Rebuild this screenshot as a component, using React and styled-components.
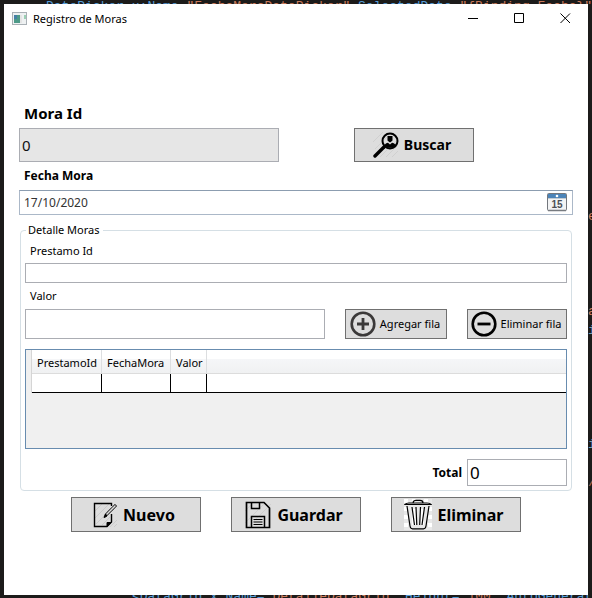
import React from "react";
import styled, { createGlobalStyle, css } from "styled-components";

const GlobalStyle = createGlobalStyle`
  *, *::before, *::after { box-sizing: border-box; }
  html, body, #root { height: 100%; }
  body {
    margin: 0;
    overflow: hidden;
    background: #1e1e1e;
    color: #000;
    font: 12px/16px "Segoe UI", "Noto Sans", "Open Sans", sans-serif;
  }
  button, input { font: inherit; color: inherit; }
`;

const Desktop = styled.div`
  display: grid;
  grid-template: 4px minmax(0, 1fr) 3px / 4px minmax(0, 1fr) 4px;
  height: 100%;
  background: #1c1b1a;
`;

const CodeLine = styled.div`
  grid-column: 1 / -1;
  overflow: hidden;
  white-space: pre;
  color: #569cd6;
  font: 13px/1 "Liberation Mono", monospace;
  line-height: ${(p) => (p.$edge === "top" ? 14 : 3)}px;
  padding-left: ${(p) => (p.$edge === "top" ? 46 : 132)}px;
`;

const CodeValue = styled.span`
  color: #c8795a;
`;

const CodeEdge = styled.div`
  overflow: hidden;
  padding-top: 13px;
  color: #d08060;
  font: 13px/19px "Liberation Mono", monospace;
`;

const CodeRow = styled.div`
  height: 19px;
  color: ${(p) => p.$color};
`;

const Window = styled.main`
  grid-column: 2;
  display: flex;
  flex-direction: column;
  background: #fff;
`;

const TitleBar = styled.header`
  display: flex;
  align-items: center;
  height: 29px;
  padding-left: 8px;
`;

const Title = styled.h1`
  flex: 1;
  margin: 0 0 0 6px;
  font-size: 11px;
  font-weight: 400;
`;

const CaptionButton = styled.button`
  display: grid;
  place-items: center;
  width: 46px;
  height: 29px;
  padding: 0;
  border: 0;
  background: transparent;
`;

const Form = styled.form`
  display: flex;
  flex-direction: column;
  padding: 68px 15px 0;
`;

const Label = styled.label`
  padding-left: 5px;
  font-size: ${(p) => p.$size || 11}px;
  font-weight: ${(p) => (p.$bold ? 700 : 400)};
  line-height: ${(p) => p.$line || 16}px;
  margin-bottom: ${(p) => p.$bottom || 0}px;
`;

const TextBox = styled.input`
  width: ${(p) => p.$width || "100%"};
  min-width: 0;
  height: ${(p) => p.$height}px;
  padding: 0 2px;
  border: 1px solid #abadb3;
  border-radius: 0;
  outline: 0;
  background: #fff;
  font-size: ${(p) => p.$size || 11}px;

  &:disabled { background: #e6e6e6; color: #111; }
`;

const Row = styled.div`
  display: flex;
  align-items: center;
  justify-content: ${(p) => p.$justify || "flex-start"};
  gap: ${(p) => p.$gap || 0}px;
  margin-top: ${(p) => p.$top || 0}px;
`;

const sizes = {
  small: css`height: 30px; gap: 4px; padding: 0 4px 0 2px; font-size: 11px;`,
  medium: css`height: 34px; gap: 4px; padding: 0 4px 0 0; font-size: 14px; font-weight: 700;`,
  large: css`height: 35px; gap: 5px; padding: 0 4px 0 0; font-size: 16px; font-weight: 700;`,
};

const Button = styled.button`
  display: flex;
  flex: none;
  align-items: center;
  justify-content: center;
  width: ${(p) => p.$width}px;
  border: 1px solid #707070;
  background: #ddd;
  white-space: nowrap;
  ${(p) => sizes[p.$size]}
  svg { flex: none; }
`;

const DateBox = styled.div`
  display: flex;
  align-items: center;
  height: 25px;
  padding-right: 5px;
  border: 1px solid #abb8c8;
  border-top-color: #8c9db0;
`;

const DateInput = styled.input`
  flex: 1;
  min-width: 0;
  padding: 0 0 0 4px;
  border: 0;
  outline: 0;
  background: transparent;
  color: #333;
`;

const IconButton = styled.button`
  display: flex;
  padding: 0;
  border: 0;
  background: transparent;
`;

const Group = styled.fieldset`
  min-width: 0;
  margin: 7px 1px 0;
  padding: 4px;
  border: 1px solid #d5dfe5;
  border-radius: 4px;
`;

const Legend = styled.legend`
  margin-left: 1px;
  padding: 0 3px 0 2px;
  font-size: 11px;
`;

const Stack = styled.div`
  display: flex;
  flex-direction: column;
`;

const GridPanel = styled.div`
  height: 100px;
  margin-top: 10px;
  border: 1px solid #688caf;
  background: #f0f0f0;
`;

const Table = styled.table`
  width: 100%;
  border-collapse: separate;
  border-spacing: 0;
  table-layout: fixed;
  font-size: 11px;
`;

const HeadCell = styled.th`
  height: 24px;
  padding: 3px 0 0 5px;
  border-right: ${(p) => (p.$last ? 0 : 1)}px solid #dcdee0;
  border-bottom: 1px solid #dcdcdc;
  background: linear-gradient(#fff 0 40%, #f5f6f8 40%, #f0f1f2);
  font-weight: 400;
  text-align: left;
  white-space: nowrap;
`;

const Corner = styled.td`
  padding: 0;
  border-right: 1px solid #d5d5d5;
  background: #f0f0f0;
`;

const Cell = styled.td`
  height: 19px;
  padding: 0;
  border-right: ${(p) => (p.$last ? 0 : 1)}px solid #000;
  border-bottom: 1px solid #000;
  background: #fff;
`;

const AppIcon = () => (
  <svg width="15" height="13" viewBox="0 0 15 13" aria-hidden="true">
    <rect x=".5" y=".5" width="14" height="12" fill="#eef1f2" stroke="#a9b0b5" />
    <rect x="2" y="3" width="6" height="8" fill="#4d9a88" />
    <path d="M2 3h3v4H2z" fill="#4681a7" />
    <path d="M8 3h2v8H8z" fill="#e4e4e4" />
    <path d="M12 3h2v4h-2z" fill="#9bd0b4" />
  </svg>
);

const Caption = ({ d }) => (
  <svg width="11" height="11" viewBox="0 0 11 11" fill="none" stroke="#000" aria-hidden="true">
    <path d={d} />
  </svg>
);

const SearchUserIcon = () => (
  <svg width="27" height="26" viewBox="0 0 27 26" fill="none" stroke="#000" aria-hidden="true">
    <path d="M0 10 10 0M2 17 19 0M7 25 25 7M13 25 25 13M19 25l6-6" stroke="#d0d0d0" />
    <circle cx="17" cy="9" r="7.5" strokeWidth="2" />
    <path d="M2 24 11 15" strokeWidth="3.4" strokeLinecap="round" />
    <path d="M14.5 4h5v4.500l-2 1.800h-1l-2-1.800z" fill="#000" stroke="none" />
    <path d="M11.500 13.500c.8-1.800 2-2.500 3.500-2.700l2 1.700 2-1.700c1.700.2 3 1 3.500 2.700-2.500 3-8 3.300-11 0z" fill="#000" stroke="none" />
  </svg>
);

const CalendarIcon = () => (
  <svg width="20" height="19" viewBox="0 0 20 19" aria-hidden="true">
    <rect x=".5" y=".5" width="19" height="17" rx="1" fill="#f3f4f5" stroke="#73777d" />
    <path d="M1 1h18v4H1z" fill="#4c84b8" />
    <path d="M1 5.500h18" stroke="#c4cbd1" />
    <circle cx="10" cy="3" r="1.300" fill="#fff" />
    <path d="M1 17.500h18" stroke="#777b80" strokeWidth="1.500" />
    <text x="10" y="14.800" textAnchor="middle" fontFamily="Liberation Sans, sans-serif" fontSize="10" fontWeight="700" fill="#4b4f55">15</text>
  </svg>
);

const CircleIcon = ({ plus }) => (
  <svg width="26" height="26" viewBox="0 0 26 26" fill="none" stroke={plus ? "#3b3939" : "#000"} aria-hidden="true">
    <circle cx="13" cy="13" r="11.300" strokeWidth="2.600" />
    <path d={plus ? "M7 13h12M13 7v12" : "M6.500 13h13"} strokeWidth="2.800" />
  </svg>
);

const NoteIcon = () => (
  <svg width="25" height="26" viewBox="0 0 25 26" fill="none" stroke="#000" aria-hidden="true">
    <path d="M2 9 9 2M2 16 16 2M3 22 17 8M9 23l8-8M17 25l7-7M21 25l3-3" stroke="#cbcbcb" />
    <path d="M18.500 4V1.500H1.500V24.500H14l4.500-4.500V12" strokeWidth="1.400" />
    <path d="M14 24.500V20.500h4z" fill="#000" />
    <path d="M12.500 13.500 23 3" strokeWidth="3" />
    <path d="M13.500 12.500 22.500 3.500" stroke="#ddd" strokeWidth="1.600" />
    <path d="M11 15.500l1-2.500 1.500 1.500z" fill="#000" />
  </svg>
);

const SaveIcon = () => (
  <svg width="27" height="28" viewBox="0 0 27 28" fill="none" stroke="#000" aria-hidden="true">
    <path d="M0 10 8 2M0 22 20 2M4 25 26 3" stroke="#d0d0d0" />
    <path d="M1.500 1.500H19l5.500 5.500v19.500h-23z" strokeWidth="1.700" />
    <path d="M6.500 2v5.500h8V2M6.500 26V15.500h13V26" strokeWidth="1.500" />
    <path d="M8.500 18.500h9M8.500 21h9M8.500 23.500h9" strokeWidth="1.200" />
  </svg>
);

const TrashIcon = () => (
  <svg width="28" height="31" viewBox="0 0 28 31" fill="none" stroke="#000" aria-hidden="true">
    <path d="M0 0h28v31H0z" fill="#e8e8e8" stroke="none" />
    <path d="M0 0h4v4H0zM8 0h4v4H8zM20 0h4v4h-4zM0 8h4v4H0zM24 8h4v4h-4zM0 16h4v4H0zM24 16h4v4h-4zM0 24h4v4H0zM24 24h4v4h-4zM8 10h4v16H8zM16 10h4v16h-4z" fill="#fff" stroke="none" />
    <path d="M1 5.500c1-1.200 2-1.500 4-1.500h18c2 0 3 .3 4 1.500zM9 4c0-2 1.500-2.700 3-2.700h4c1.500 0 3 .7 3 2.700M3 7l3 20c.3 1.800 1 2.800 2.500 2.800h11c1.500 0 2.200-1 2.500-2.800L25 7" strokeWidth="1.200" />
    <path d="M8 8l2.500 18M12 8l.8 18M16.500 8l-.8 18M20.500 8 18 26" strokeWidth="1.200" />
  </svg>
);

const edgeCode = {
  10: ["e", "#d08060"],
  15: ["a", "#d08060"],
  16: ["i", "#6f9fb8"],
  22: ["i", "#6f9fb8"],
  24: ["/", "#b06a50"],
};

export default function App() {
  return (
    <>
      <GlobalStyle />
      <Desktop>
        <CodeLine $edge="top" aria-hidden="true">
          {"DatePicker x:Name="}<CodeValue>"FechaMoraDatePicker"</CodeValue>{" SelectedDate="}<CodeValue>{'"{Binding Fecha}"'}</CodeValue>
        </CodeLine>
        <Window>
          <TitleBar>
            <AppIcon />
            <Title>Registro de Moras</Title>
            <CaptionButton aria-label="Minimizar"><Caption d="M0 5.500h10" /></CaptionButton>
            <CaptionButton aria-label="Maximizar"><Caption d="M.5.5h9v9H.5z" /></CaptionButton>
            <CaptionButton aria-label="Cerrar"><Caption d="M.5.5l9.500 9.500M10 .5l-9.500 9.500" /></CaptionButton>
          </TitleBar>
          <Form onSubmit={(e) => e.preventDefault()}>
            <Label htmlFor="mora" $size={15} $line={24} $bottom={3} $bold>Mora Id</Label>
            <Row $gap={75}>
              <TextBox id="mora" $width="260px" $height={34} $size={15} defaultValue="0" disabled />
              <Button type="button" $size="medium" $width={120}><SearchUserIcon />Buscar</Button>
            </Row>
            <Label htmlFor="fecha" $size={12} $line={28} $bold>Fecha Mora</Label>
            <DateBox>
              <DateInput id="fecha" defaultValue="17/10/2020" />
              <IconButton type="button" aria-label="Abrir calendario"><CalendarIcon /></IconButton>
            </DateBox>
            <Group>
              <Legend>Detalle Moras</Legend>
              <Stack>
                <Label htmlFor="prestamo" $line={18} $bottom={3}>Prestamo Id</Label>
                <TextBox id="prestamo" $height={20} />
                <Label htmlFor="valor" $line={26}>Valor</Label>
                <Row $gap={20}>
                  <TextBox id="valor" $height={30} />
                  <Button type="button" $size="small" $width={102}><CircleIcon plus />Agregar fila</Button>
                  <Button type="button" $size="small" $width={100}><CircleIcon />Eliminar fila</Button>
                </Row>
                <GridPanel>
                  <Table>
                    <colgroup>
                      <col width="6" /><col width="70" /><col width="69" /><col width="36" /><col />
                    </colgroup>
                    <thead>
                      <tr>
                        <Corner />
                        <HeadCell>PrestamoId</HeadCell>
                        <HeadCell>FechaMora</HeadCell>
                        <HeadCell>Valor</HeadCell>
                        <HeadCell $last />
                      </tr>
                    </thead>
                    <tbody>
                      <tr><Corner /><Cell /><Cell /><Cell /><Cell $last /></tr>
                    </tbody>
                  </Table>
                </GridPanel>
                <Row $justify="flex-end" $gap={5} $top={10}>
                  <Label htmlFor="total" $size={12} $bold>Total</Label>
                  <TextBox id="total" $width="100px" $height={27} $size={17} defaultValue="0" />
                </Row>
              </Stack>
            </Group>
            <Row $justify="center" $gap={30} $top={6}>
              <Button type="button" $size="large" $width={130}><NoteIcon />Nuevo</Button>
              <Button type="submit" $size="large" $width={130}><SaveIcon />Guardar</Button>
              <Button type="button" $size="large" $width={130}><TrashIcon />Eliminar</Button>
            </Row>
          </Form>
        </Window>
        <CodeEdge aria-hidden="true">
          {Array.from({ length: 25 }, (_, i) => (
            <CodeRow key={i} $color={edgeCode[i]?.[1]}>{edgeCode[i]?.[0]}</CodeRow>
          ))}
        </CodeEdge>
        <CodeLine $edge="bottom" aria-hidden="true">
          {"<DataGrid x:Name="}<CodeValue>"DetalleDataGrid"</CodeValue>{" Height="}<CodeValue>"100"</CodeValue>{" AutoGenerate"}
        </CodeLine>
      </Desktop>
    </>
  );
}
